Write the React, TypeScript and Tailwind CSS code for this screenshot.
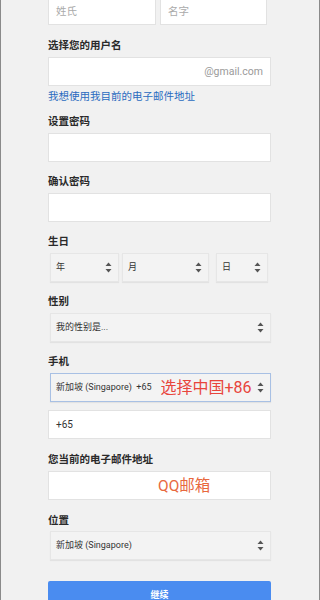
const FONT = { fontFamily: '"Roboto", "Noto Sans CJK SC", sans-serif' };

function Arrows() {
  return (
    <svg width="7" height="11" viewBox="0 0 7 11" className="flex-shrink-0">
      <path d="M3.5 0.5 L6.5 4 L0.5 4 Z" fill="#555" />
      <path d="M3.5 10.5 L6.5 7 L0.5 7 Z" fill="#555" />
    </svg>
  );
}

function Label({ children, className = 'mt-[13px] mb-[4px]' }: { children: React.ReactNode; className?: string }) {
  return (
    <div className={`h-[14px] leading-[14px] text-[10.5px] font-bold text-[#2a2a2a] ${className}`}>
      {children}
    </div>
  );
}

function Input({ children, className = '' }: { children?: React.ReactNode; className?: string }) {
  return (
    <div className={`h-[29px] bg-white border border-[#e2e2e2] flex items-center px-[7px] ${className}`}>
      {children}
    </div>
  );
}

function Select({ children, className = '', blue = false }: { children?: React.ReactNode; className?: string; blue?: boolean }) {
  return (
    <div
      className={`h-[29px] flex items-center pl-[5px] pr-[6px] bg-[#f3f3f3] border shadow-[0_1px_1px_rgba(0,0,0,0.06)] ${
        blue ? 'border-[#a8c0e4]' : 'border-[#e6e6e6]'
      } ${className}`}
    >
      <div className="flex-1 min-w-0 flex items-center text-[9px] text-[#333]">{children}</div>
      <Arrows />
    </div>
  );
}

export default function App() {
  return (
    <div className="w-[320px] h-[600px] overflow-hidden bg-[#f1f1f1] border-x border-[#8a8a8a]" style={FONT}>
      <div className="pl-[47px] pr-[48px] flex flex-col">
        {/* Name row */}
        <div className="-mt-[4px] flex gap-[4px] w-[219px]">
          <Input className="w-[108px]">
            <span className="text-[10.5px] text-[#aaa] pt-[2px]">姓氏</span>
          </Input>
          <Input className="w-[107px]">
            <span className="text-[10.5px] text-[#aaa] pt-[2px]">名字</span>
          </Input>
        </div>

        <Label className="mt-[14px] mb-[4px]">选择您的用户名</Label>
        <Input className="justify-end">
          <span className="text-[10.5px] text-[#9a9a9a]">@gmail.com</span>
        </Input>
        <div className="mt-[4px] h-[14px] leading-[14px] text-[10.5px] text-[#2a6bc0]">
          我想使用我目前的电子邮件地址
        </div>

        <Label className="mt-[11px] mb-[4px]">设置密码</Label>
        <Input />

        <Label>确认密码</Label>
        <Input />

        <Label>生日</Label>
        <div className="flex ml-[2px]">
          <Select className="w-[69px]">年</Select>
          <Select className="w-[87px] ml-[3px]">月</Select>
          <Select className="w-[52px] ml-[7px]">日</Select>
        </div>

        <Label>性别</Label>
        <Select className="ml-[2px]">我的性别是...</Select>

        <Label>手机</Label>
        <Select className="ml-[2px]" blue>
          <span className="whitespace-pre">新加坡 (Singapore)  +65</span>
          <span className="ml-[9px] text-[16px] leading-none text-[#e8453c]">选择中国+86</span>
        </Select>
        <Input className="mt-[8px]">
          <span className="text-[10px] text-[#333]">+65</span>
        </Input>

        <Label className="mt-[14px] mb-[4px]">您当前的电子邮件地址</Label>
        <Input className="h-[28px] pl-[109px]">
          <span className="mt-[2px] text-[15.5px] leading-none text-[#e8683e]">QQ邮箱</span>
        </Input>

        <Label className="mt-[14px] mb-[3px]">位置</Label>
        <Select className="ml-[2px]">新加坡 (Singapore)</Select>

        <div className="mt-[21px] h-[30px] bg-[#4a8cf0] rounded-t-[2px] flex items-center justify-center">
          <span className="text-[9px] font-bold text-white">继续</span>
        </div>
      </div>
    </div>
  );
}
